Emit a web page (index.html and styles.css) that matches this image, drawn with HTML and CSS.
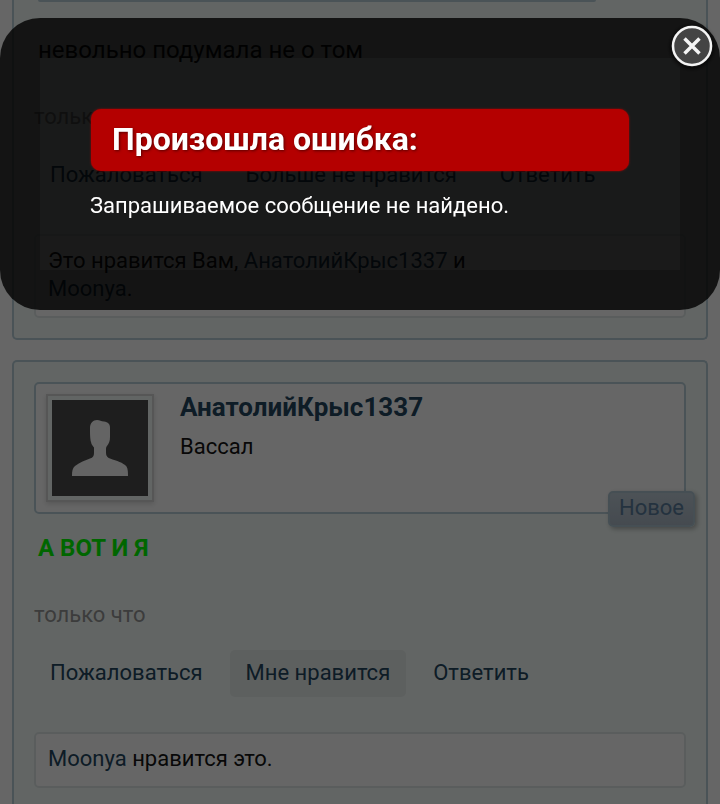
FILE: index.html
```html
<!DOCTYPE html>
<html lang="ru">
<head>
<meta charset="utf-8">
<meta name="viewport" content="width=device-width, initial-scale=1">
<title>Произошла ошибка</title>
<link rel="stylesheet" href="styles.css">
</head>
<body>
<main class="feed">
  <article class="post post-continued">
    <div class="quote"></div>
    <p class="message">невольно подумала не о том</p>
    <p class="time">только что</p>
    <nav class="actions">
      <a href="#">Пожаловаться</a>
      <a href="#">Больше не нравится</a>
      <a href="#">Ответить</a>
    </nav>
    <p class="likes">Это нравится Вам, <a href="#">АнатолийКрыс1337</a> и<br><a href="#">Moonya</a>.</p>
  </article>
  <article class="post post-open">
    <header class="user">
      <a class="avatar" href="#" aria-label="АнатолийКрыс1337">
        <svg viewBox="0 0 96 96" aria-hidden="true">
          <path d="M20 76C20 71 20.500 68 23 66C28 62 33 60.500 38 58.500C41 57.500 42 56 42 53V47.500C41 46 39.500 45 39 42C38 39 38 32 38 28C38 23 41 20 45 20C48 20 49 21.500 52 21.500C56 22 58 24 58 28V37C58 41 57 43.500 55 46C54 47 54 48 54 50V53C54 56 55.500 57.500 58 58.500C65 61 71 62.500 74.500 66.500C76 69 76 73 76 76Z"/>
        </svg>
      </a>
      <div class="who">
        <h2><a href="#">АнатолийКрыс1337</a></h2>
        <p>Вассал</p>
      </div>
      <span class="badge">Новое</span>
    </header>
    <p class="message shout">А ВОТ И Я</p>
    <p class="time">только что</p>
    <nav class="actions">
      <a href="#">Пожаловаться</a>
      <a class="current" href="#">Мне нравится</a>
      <a href="#">Ответить</a>
    </nav>
    <p class="likes"><a href="#">Moonya</a> нравится это.</p>
  </article>
</main>
<div class="mask"></div>
<section class="dialog" role="alertdialog" aria-labelledby="dialog-title">
  <h1 id="dialog-title">Произошла ошибка:</h1>
  <p>Запрашиваемое сообщение не найдено.</p>
  <button class="close" type="button" aria-label="Закрыть">
    <svg viewBox="0 0 42 42" aria-hidden="true">
      <circle cx="21" cy="21" r="19" fill="#444" stroke="#f4f4f4" stroke-width="2.500"/>
      <path d="M13.500 13.500L28.500 28.500M28.500 13.500L13.500 28.500" stroke="#f4f4f4" stroke-width="3.500"/>
    </svg>
  </button>
</section>
</body>
</html>
```
FILE: styles.css
```css
* {
  box-sizing: border-box;
}

body,
h1,
h2,
p {
  margin: 0;
}

body {
  background: #fff;
  color: #141414;
  font: 22px/28px Roboto, sans-serif;
}

a {
  color: #23465f;
  text-decoration: none;
}

.feed {
  display: flex;
  flex-direction: column;
  gap: 20px;
  padding: 0 12px;
}

.post {
  padding: 20px;
  border: 2px solid #b9d0da;
  border-radius: 5px;
  background: #f5fdfa;
}

.post-continued {
  padding-top: 0;
  border-top: 0;
  border-radius: 0 0 5px 5px;
}

.post-open {
  padding-bottom: 16px;
  border-bottom: 0;
  border-radius: 5px 5px 0 0;
}

.quote {
  height: 2px;
  margin: 0 90px 0 4px;
  border-radius: 0 0 5px 5px;
  background: #b9d0da;
}

.message {
  padding: 34px 4px 0;
  font-size: 24px;
}

.shout {
  padding-top: 20px;
  color: #0f0;
  font-weight: bold;
}

.time {
  padding-top: 39px;
  color: #969696;
}

.actions {
  display: flex;
  gap: 11px;
  padding: 21px 0 35px;
}

.actions a {
  padding: 9px 16px 10px;
  border-radius: 5px;
}

.actions .current {
  background: #e9efed;
}

.likes {
  padding: 11px 12px 13px;
  border: 2px solid #e1e9e9;
  border-radius: 5px;
  background: #fff;
}

.user {
  position: relative;
  display: flex;
  gap: 26px;
  padding: 10px;
  border: 2px solid #b9d0da;
  border-radius: 5px;
  background: #fff;
}

.avatar {
  width: 108px;
  height: 108px;
  padding: 4px;
  border: 2px solid #d7d7d7;
  background: #f5fdfa;
  box-shadow: 0 2px 5px rgba(0, 0, 0, 0.15);
}

.avatar svg {
  display: block;
  background: #4b4b4b;
  fill: #fafafa;
}

.who h2 {
  font-size: 26px;
  line-height: 26px;
}

.who p {
  padding-top: 13px;
}

.badge {
  position: absolute;
  right: -11px;
  bottom: -15px;
  padding: 1px 9px 3px;
  border: 2px solid #afc6d2;
  border-radius: 5px;
  background: linear-gradient(#bfcdd8, #adbac8);
  color: #5a7d9d;
  box-shadow: 2px 2px 5px rgba(0, 0, 0, 0.3);
}

.mask {
  position: fixed;
  inset: 0;
  background: rgba(0, 0, 0, 0.6);
}

.dialog {
  position: fixed;
  top: 18px;
  right: 0;
  left: 0;
  padding: 50px;
  border: 40px solid rgba(0, 0, 0, 0.8);
  border-radius: 40px;
  background: rgba(0, 0, 0, 0.75);
  background-clip: padding-box;
  color: #fff;
}

.dialog h1 {
  margin: 1px;
  padding: 10px 20px 12px 21px;
  border-radius: 10px;
  background: #b40000;
  box-shadow: 0 0 2px #b40000;
  font-size: 32px;
  line-height: 40px;
  text-shadow: 1px 1px 3px rgba(0, 0, 0, 0.5);
}

.dialog p {
  padding-top: 20px;
}

.close {
  position: absolute;
  top: -33px;
  right: -33px;
  width: 42px;
  height: 42px;
  padding: 0;
  border: 0;
  border-radius: 50%;
  background: none;
  box-shadow: 0 1px 5px #000;
  cursor: pointer;
}

.close svg {
  display: block;
}
```
